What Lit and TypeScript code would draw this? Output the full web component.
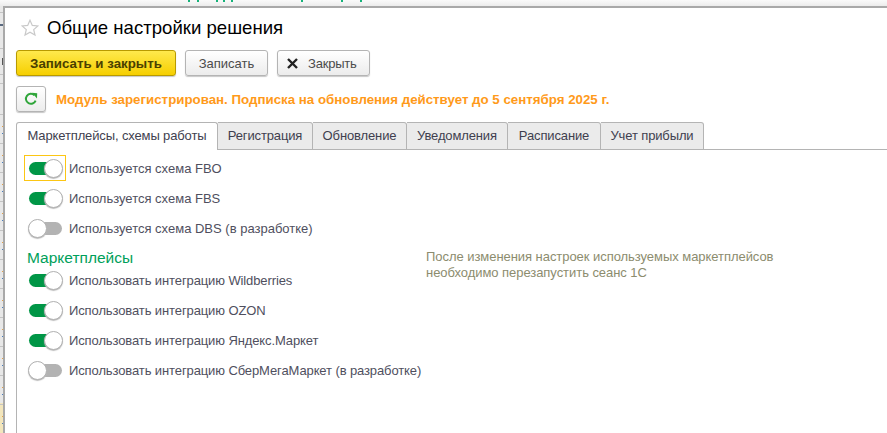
import { LitElement, html, css, svg } from "lit";
import { customElement } from "lit/decorators.js";

const tabs = [
  { t: "Маркетплейсы, схемы работы", w: 202, active: true },
  { t: "Регистрация", w: 95 },
  { t: "Обновление", w: 94 },
  { t: "Уведомления", w: 101 },
  { t: "Расписание", w: 93 },
  { t: "Учет прибыли", w: 103 },
];
const bits = [188, 197, 216, 223, 231, 301, 341, 360];
const headLines = [6, 42, 68, 77];
const rowYs = [108, 137, 166, 195, 224, 253, 282, 311, 340, 369, 398];

@customElement("app-root")
export class AppRoot extends LitElement {
  static styles = css`
    :host { display: block; width: 887px; height: 433px; overflow: hidden; background: #e4e4e4; font-family: "Liberation Sans", Arial, sans-serif; }
    .top { display: block; width: 887px; height: 6px; }
    .body { display: flex; height: 427px; }
    .left { display: block; width: 3px; height: 427px; flex: none; }
    .win { flex: 1; background: #fff; border-top: 2px solid #a9a9a9; border-left: 2px solid #a9a9a9; box-sizing: border-box; padding: 0 0 0 11px; min-width: 0; }
    .head { display: flex; align-items: center; height: 40px; padding-left: 4px; }
    .star { width: 18px; height: 18px; margin-right: 8px; flex: none; margin-left: 1px; }
    h1 { margin: 0; font-weight: 400; font-size: 18.6px; color: #000; line-height: 40px; white-space: nowrap; }
    .bar { display: flex; gap: 9px; height: 26px; margin-top: 2px; }
    .btn { box-sizing: border-box; height: 26px; border: 1px solid #b4b4b4; border-radius: 3px; background: linear-gradient(#fff, #ececec); box-shadow: 0 1px 1px #c8c8c8; display: flex; align-items: center; justify-content: center; font-size: 13px; color: #4b4b4b; white-space: nowrap; }
    .primary { width: 160px; background: linear-gradient(#ffe94d, #f6cf00); border-color: #b89a00; color: #4a4000; font-weight: 700; font-size: 13.3px; }
    .save { width: 83px; }
    .close { width: 93px; gap: 10px; justify-content: flex-start; padding-left: 9px; letter-spacing: -0.2px; }
    .msg { display: flex; align-items: center; height: 26px; margin-top: 10px; gap: 10px; }
    .refresh { width: 30px; }
    .msgt { font-weight: 700; font-size: 13.3px; color: #ff9a1a; white-space: nowrap; }
    .tabs { display: flex; height: 28px; margin-top: 10px; border-bottom: 1px solid #b4b4b4; box-sizing: border-box; }
    .tab { box-sizing: border-box; height: 28px; flex: none; display: flex; align-items: center; justify-content: center; font-size: 13px; letter-spacing: -0.13px; color: #3f3f4f; background: #ebebeb; border: 1px solid #b4b4b4; border-left: none; border-radius: 0 3px 0 0; padding-bottom: 2px; white-space: nowrap; }
    .tab.active { background: #fff; border-left: 1px solid #b4b4b4; border-bottom: none; border-radius: 3px 3px 0 0; }
    .panel { border-left: 1px solid #b4b4b4; height: 300px; padding: 3px 0 0 7px; display: grid; grid-template-columns: 402px 1fr; position: relative; }
    .col { display: flex; flex-direction: column; }
    .row { display: flex; align-items: center; height: 30px; }
    .tg { box-sizing: border-box; width: 42px; height: 26px; border: 1px solid transparent; display: flex; align-items: center; justify-content: center; flex: none; margin-right: 3px; }
    .row.focus .tg { border-color: #fcc614; }
    .sw { position: relative; width: 33px; height: 13px; border-radius: 7px; background: #b3b3b3; }
    .sw.on { background: #009646; }
    .knob { position: absolute; top: -3px; left: -1px; width: 19px; height: 19px; box-sizing: border-box; border-radius: 50%; background: #fff; border: 1px solid #b0b0b0; box-shadow: 0 1px 1px #bdbdbd; }
    .sw.on .knob { left: 15px; }
    .lbl { font-size: 13px; color: #4f4f5e; white-space: nowrap; }
    .group2 .lbl { letter-spacing: -0.11px; }
    h2 { margin: 0; font-weight: 400; font-size: 15.5px; color: #00a05a; line-height: 20px; height: 20px; margin-left: 3px; }
    .group { margin-top: 5px; }
    .group2 { margin-top: -3px; }
    .note { font-size: 13px; letter-spacing: -0.05px; line-height: 16px; color: #8c8c6e; white-space: nowrap; padding-top: 96px; }
  `;

  toggle(label: string, on: boolean, focus = false) {
    return html`<div class="row ${focus ? "focus" : ""}">
      <div class="tg"><div class="sw ${on ? "on" : ""}"><div class="knob"></div></div></div>
      <span class="lbl">${label}</span>
    </div>`;
  }

  render() {
    return html`
      <svg class="top" viewBox="0 0 887 6">
        <defs><linearGradient id="g" x1="0" y1="0" x2="0" y2="1"><stop offset="0" stop-color="#fafafa"/><stop offset="1" stop-color="#ececec"/></linearGradient></defs>
        <rect width="887" height="6" fill="url(#g)"/>
        ${bits.map((x) => svg`<rect x="${x}" y="0" width="2" height="2" fill="#17b27a"/>`)}
      </svg>
      <div class="body">
        <svg class="left" viewBox="0 0 3 427">
          <rect width="3" height="427" fill="#e8e8e8"/>
          <rect y="397" width="3" height="30" fill="#f3e6bc"/>
          ${[...headLines, ...rowYs].map((y) => svg`<rect y="${y}" width="3" height="1" fill="#c4c4c4"/>`)}
          ${rowYs.map((y) => svg`<rect x="2" y="${y + 12}" width="1" height="1" fill="#e5a24a"/><rect x="2" y="${y + 19}" width="1" height="1" fill="#4a7fc0"/>`)}
          <rect x="0" y="18" width="3" height="2" fill="#5a6a80"/>
          <rect x="2" y="52" width="1" height="7" fill="#555"/>
        </svg>
        <div class="win">
          <div class="head">
            <svg class="star" viewBox="0 0 18 18"><path d="M9 1.2l2.3 5.2 5.6.5-4.2 3.7 1.3 5.5L9 13.2l-5 2.9 1.3-5.5L1.1 6.9l5.6-.5z" fill="#fff" stroke="#c9c9c9" stroke-width="1.2"/></svg>
            <h1>Общие настройки решения</h1>
          </div>
          <div class="bar">
            <div class="btn primary">Записать и закрыть</div>
            <div class="btn save">Записать</div>
            <div class="btn close">
              <svg width="11" height="11" viewBox="0 0 11 11"><path d="M1 1l9 9M10 1l-9 9" stroke="#222" stroke-width="2.4" fill="none"/></svg>
              <span>Закрыть</span>
            </div>
          </div>
          <div class="msg">
            <div class="btn refresh">
              <svg width="14" height="14" viewBox="0 0 14 14"><path d="M11.6 8.6A5 5 0 1 1 10.4 3.2" stroke="#2fa53a" stroke-width="2" fill="none"/><path d="M8 .8l5.2.4-.2 5.2z" fill="#2fa53a"/></svg>
            </div>
            <span class="msgt">Модуль зарегистрирован. Подписка на обновления действует до 5 сентября 2025 г.</span>
          </div>
          <div class="tabs">
            ${tabs.map((t) => html`<div class="tab ${t.active ? "active" : ""}" style="width:${t.w}px">${t.t}</div>`)}
          </div>
          <div class="panel">
            <div class="col">
              ${this.toggle("Используется схема FBO", true, true)}
              ${this.toggle("Используется схема FBS", true)}
              ${this.toggle("Используется схема DBS (в разработке)", false)}
              <div class="group"><h2>Маркетплейсы</h2></div>
              <div class="group2">
                ${this.toggle("Использовать интеграцию Wildberries", true)}
                ${this.toggle("Использовать интеграцию OZON", true)}
                ${this.toggle("Использовать интеграцию Яндекс.Маркет", true)}
                ${this.toggle("Использовать интеграцию СберМегаМаркет (в разработке)", false)}
              </div>
            </div>
            <div class="note">После изменения настроек используемых маркетплейсов<br>необходимо перезапустить сеанс 1С</div>
          </div>
        </div>
      </div>
    `;
  }
}
